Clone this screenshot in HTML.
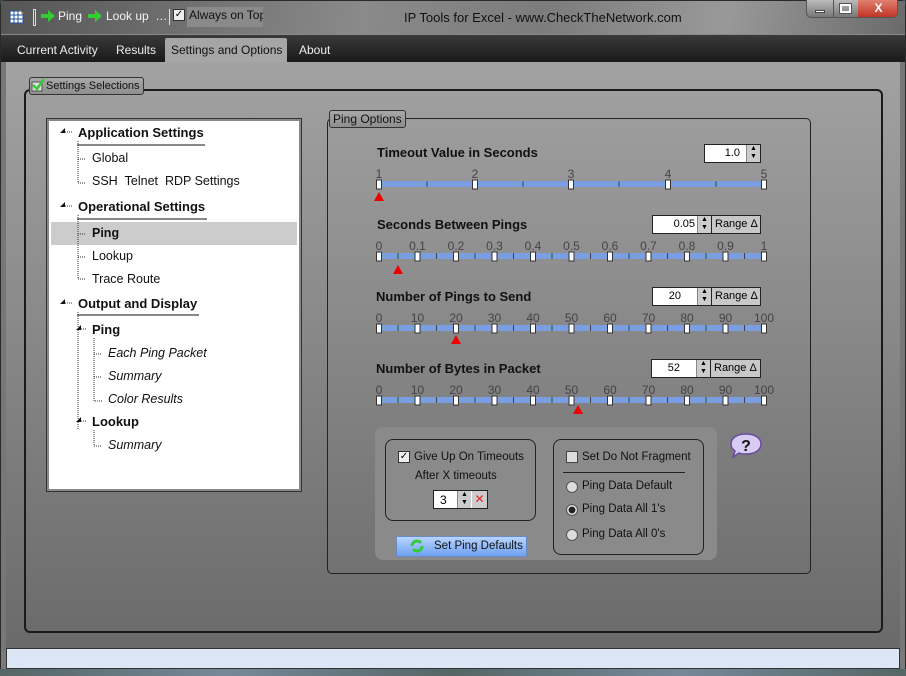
<!DOCTYPE html>
<html><head><meta charset="utf-8"><style>
*{margin:0;padding:0;box-sizing:border-box}
body{width:906px;height:676px;overflow:hidden;font-family:"Liberation Sans","DejaVu Sans",sans-serif;background:#3a4a50;position:relative}
.a{position:absolute}
#win{left:0;top:0;width:906px;height:676px;background:linear-gradient(#6e6e6e,#9a9a9a 8%,#7a7a7a);border:1px solid #2a2a2a;border-radius:6px 6px 0 0}
#title{left:1px;top:1px;width:904px;height:33px;background:linear-gradient(100deg,#555 0%,#8a8a8a 40%,#7c7c7c 60%,#999 80%,#6a6a6a);}
#tabs{left:1px;top:35px;width:904px;height:27px;background:linear-gradient(#3a3a3a,#1a1a1a)}
.tab{top:6px;height:21px;font-size:12px;color:#eee;line-height:16px}
#content{left:6px;top:62px;width:894px;height:586px;background:linear-gradient(#a2a2a2,#6a6a6a)}
.gb{border:2px solid #1a1a1a;border-radius:6px}
.leg{font-size:11px;color:#111;border:1px solid #333;border-radius:3px;background:linear-gradient(#a8a8a8,#8e8e8e);padding:0 3px;line-height:15px}
.t{font-size:12.5px;color:#111;white-space:nowrap}
.b{font-weight:bold;font-size:13px}
.i{font-style:italic}
.lbl{font-size:13px;font-weight:bold;color:#111}
.spin{background:#fff;border:1px solid #222;height:19px;font-size:11px;text-align:right}
.btns{background:#ccc;border-left:1px solid #888;width:14px;height:17px;font-size:7px;text-align:center;line-height:8px;color:#000}
.rng{background:#c8c8c8;border:1px solid #222;height:19px;font-size:11px;line-height:17px;padding-left:3px}
</style></head><body>
<div id="win" class="a"></div>
<div id="title" class="a"></div>
<svg class="a" style="left:9px;top:8px" width="16" height="16"><rect x="1" y="3" width="13" height="12" fill="#fff" stroke="#2250a0"/><path d="M1 7h13M1 11h13M5 3v12M9 3v12" stroke="#2250a0"/><path d="M10 1l5 4-2 1z" fill="#c08030"/></svg>
<div class="a" style="left:33px;top:9px;width:3px;height:17px;border:1px solid #ddd"></div>
<svg class="a" style="left:41px;top:10px" width="15" height="12"><path d="M0 4h7V0l7 6-7 6V8H0z" fill="#3c3"/></svg>
<div class="a t" style="left:58px;top:9px;color:#f4f4f4;font-size:12px">Ping</div>
<svg class="a" style="left:88px;top:10px" width="15" height="12"><path d="M0 4h7V0l7 6-7 6V8H0z" fill="#3c3"/></svg>
<div class="a t" style="left:106px;top:9px;color:#f4f4f4;font-size:12px">Look up &nbsp;…</div>
<div class="a" style="left:169px;top:9px;width:1px;height:16px;background:#ddd"></div>
<div class="a" style="left:173px;top:9px;width:12px;height:12px;border:1px solid #333;background:#eee;font-size:10px;line-height:10px;text-align:center">✓</div>
<div class="a t" style="left:187px;top:7px;background:#8a8a8a;color:#111;font-size:12px;padding:1px 2px;height:20px;width:76px;overflow:hidden">Always on Top</div>
<div class="a t" style="left:404px;top:10px;color:#111;font-size:13px">IP Tools for Excel - www.CheckTheNetwork.com</div>
<div class="a" style="left:806px;top:0;width:92px;height:18px;border:1px solid #555;border-top:none;border-radius:0 0 5px 5px;background:linear-gradient(#bbb,#777);overflow:hidden">
<div class="a" style="left:26px;top:0;width:1px;height:18px;background:#555"></div>
<div class="a" style="left:51px;top:0;width:41px;height:18px;background:linear-gradient(#e08070,#c03020);color:#fff;font-size:12px;font-weight:bold;text-align:center;line-height:16px">X</div>
<div class="a" style="left:8px;top:10px;width:10px;height:3px;background:#fff;border:1px solid #444"></div>
<div class="a" style="left:33px;top:4px;width:11px;height:9px;border:2px solid #fff;outline:1px solid #555"></div>
</div>
<div id="tabs" class="a"></div>
<div class="a tab" style="left:17px;top:42px">Current Activity</div>
<div class="a tab" style="left:116px;top:42px">Results</div>
<div class="a" style="left:165px;top:38px;width:122px;height:24px;background:#a6a6a6;border-radius:2px 2px 0 0"></div>
<div class="a tab" style="left:171px;top:42px;color:#111">Settings and Options</div>
<div class="a tab" style="left:299px;top:42px">About</div>
<div id="content" class="a"></div>
<div class="a" style="left:1px;top:62px;width:5px;height:590px;background:#777"></div>
<div class="a" style="left:900px;top:62px;width:5px;height:590px;background:#777"></div>
<div class="a" style="left:6px;top:648px;width:894px;height:21px;background:#dde6f4;border:1px solid #333"></div>
<div class="a" style="left:0;top:669px;width:906px;height:7px;background:linear-gradient(90deg,#566,#789,#566,#789,#566)"></div>

<div class="a gb" style="left:24px;top:89px;width:859px;height:544px"></div>
<div class="a leg" style="left:29px;top:77px;height:18px;padding-left:16px;line-height:16px">Settings Selections</div>
<svg class="a" style="left:31px;top:78px" width="14" height="14"><rect x="1" y="4" width="10" height="9" fill="#ddd" stroke="#555"/><path d="M2 7l4 4 7-10" stroke="#3c3" stroke-width="2.5" fill="none"/></svg>

<div class="a" style="left:47px;top:119px;width:254px;height:372px;background:#fff;border:2px solid #888;outline:1px solid #333"></div>
<div class="a" style="left:51px;top:222px;width:246px;height:23px;background:#ccc"></div>
<svg class="a" style="left:50px;top:120px" width="220" height="340">
<g fill="#111"><path d="M10 13l5-5v5z"/><path d="M10 87l5-5v5z"/><path d="M10 184l5-5v5z"/><path d="M26 210l5-5v5z"/><path d="M26 302l5-5v5z"/></g>
<g stroke="#333" stroke-dasharray="1 1" fill="none">
<path d="M15 12h8M15 86h8M15 183h8M31 209h5M31 301h5"/>
<path d="M28 21v42h8M28 39h8"/>
<path d="M28 95v64h8M28 114h8M28 137h8"/>
<path d="M28 192v117"/>
<path d="M44 218v63h8M44 234h8M44 257h8"/>
<path d="M44 310v16h8"/>
</g>
<g stroke="#111"><path d="M27 25h128M27 99h130M27 195h122"/></g>
</svg>
<div class="a t b" style="left:78px;top:125px">Application Settings</div>
<div class="a t" style="left:92px;top:151px">Global</div>
<div class="a t" style="left:92px;top:174px">SSH &nbsp;Telnet &nbsp;RDP Settings</div>
<div class="a t b" style="left:78px;top:199px">Operational Settings</div>
<div class="a t b" style="left:92px;top:226px;font-size:12.5px">Ping</div>
<div class="a t" style="left:92px;top:249px">Lookup</div>
<div class="a t" style="left:92px;top:272px">Trace Route</div>
<div class="a t b" style="left:78px;top:296px">Output and Display</div>
<div class="a t b" style="left:92px;top:322px">Ping</div>
<div class="a t i" style="left:108px;top:346px">Each Ping Packet</div>
<div class="a t i" style="left:108px;top:369px">Summary</div>
<div class="a t i" style="left:108px;top:392px">Color Results</div>
<div class="a t b" style="left:92px;top:414px">Lookup</div>
<div class="a t i" style="left:108px;top:438px">Summary</div>

<div class="a" style="left:327px;top:118px;width:484px;height:456px;border:1px solid #222;border-radius:5px"></div>
<div class="a leg" style="left:329px;top:110px;height:18px;line-height:16px;font-size:12px">Ping Options</div>

<div class="a lbl" style="left:377px;top:145px">Timeout Value in Seconds</div>
<div class="a spin" style="left:704px;top:144px;width:57px"><span style="position:absolute;right:20px;top:2px">1.0</span><div class="a btns" style="right:0;top:0">▲<br>▼</div></div>
<div class="a lbl" style="left:377px;top:217px">Seconds Between Pings</div>
<div class="a spin" style="left:652px;top:215px;width:60px"><span style="position:absolute;right:16px;top:2px">0.05</span><div class="a btns" style="right:0;top:0">▲<br>▼</div></div>
<div class="a rng" style="left:711px;top:215px;width:50px">Range Δ</div>
<div class="a lbl" style="left:376px;top:289px">Number of Pings to Send</div>
<div class="a spin" style="left:652px;top:287px;width:60px"><span style="position:absolute;right:30px;top:2px">20</span><div class="a btns" style="right:0;top:0">▲<br>▼</div></div>
<div class="a rng" style="left:711px;top:287px;width:50px">Range Δ</div>
<div class="a lbl" style="left:376px;top:361px">Number of Bytes in Packet</div>
<div class="a spin" style="left:651px;top:359px;width:60px"><span style="position:absolute;right:30px;top:2px">52</span><div class="a btns" style="right:0;top:0">▲<br>▼</div></div>
<div class="a rng" style="left:710px;top:359px;width:51px">Range Δ</div>

<svg class="a" style="left:0;top:0" width="906" height="430" font-family="Liberation Sans,sans-serif" font-size="12" fill="#444">
<defs><g id="th"><rect x="-2.5" y="-4" width="5" height="9" fill="#fff" stroke="#333" stroke-width="1"/></g></defs>
<rect x="379" y="181" width="385" height="6" fill="#7a9ee0"/>
<g stroke="#444"><path d="M427 181v6M523 181v6M619 181v6M716 181v6"/></g>
<g text-anchor="middle"><text x="379" y="178">1</text><text x="475" y="178">2</text><text x="571" y="178">3</text><text x="668" y="178">4</text><text x="764" y="178">5</text></g>
<use href="#th" x="379" y="184"/><use href="#th" x="475" y="184"/><use href="#th" x="571" y="184"/><use href="#th" x="668" y="184"/><use href="#th" x="764" y="184"/>
<path d="M379 192l-5 9h10z" fill="#e00"/>
<rect x="379" y="253" width="385" height="6" fill="#7a9ee0"/>
<g stroke="#444"><path d="M398 253v6M436.5 253v6M475 253v6M513.5 253v6M552 253v6M590.5 253v6M629 253v6M667.5 253v6M706 253v6M744.5 253v6"/></g>
<g text-anchor="middle"><text x="379" y="250">0</text><text x="417.5" y="250">0.1</text><text x="456" y="250">0.2</text><text x="494.5" y="250">0.3</text><text x="533" y="250">0.4</text><text x="571.5" y="250">0.5</text><text x="610" y="250">0.6</text><text x="648.5" y="250">0.7</text><text x="687" y="250">0.8</text><text x="725.5" y="250">0.9</text><text x="764" y="250">1</text></g>
<use href="#th" x="379" y="256"/><use href="#th" x="417.5" y="256"/><use href="#th" x="456" y="256"/><use href="#th" x="494.5" y="256"/><use href="#th" x="533" y="256"/><use href="#th" x="571.5" y="256"/><use href="#th" x="610" y="256"/><use href="#th" x="648.5" y="256"/><use href="#th" x="687" y="256"/><use href="#th" x="725.5" y="256"/><use href="#th" x="764" y="256"/>
<path d="M398 265l-5 9h10z" fill="#e00"/>
<rect x="379" y="325" width="385" height="6" fill="#7a9ee0"/>
<g stroke="#444"><path d="M398 325v6M436.5 325v6M475 325v6M513.5 325v6M552 325v6M590.5 325v6M629 325v6M667.5 325v6M706 325v6M744.5 325v6"/></g>
<g text-anchor="middle"><text x="379" y="322">0</text><text x="417.5" y="322">10</text><text x="456" y="322">20</text><text x="494.5" y="322">30</text><text x="533" y="322">40</text><text x="571.5" y="322">50</text><text x="610" y="322">60</text><text x="648.5" y="322">70</text><text x="687" y="322">80</text><text x="725.5" y="322">90</text><text x="764" y="322">100</text></g>
<use href="#th" x="379" y="328"/><use href="#th" x="417.5" y="328"/><use href="#th" x="456" y="328"/><use href="#th" x="494.5" y="328"/><use href="#th" x="533" y="328"/><use href="#th" x="571.5" y="328"/><use href="#th" x="610" y="328"/><use href="#th" x="648.5" y="328"/><use href="#th" x="687" y="328"/><use href="#th" x="725.5" y="328"/><use href="#th" x="764" y="328"/>
<path d="M456 335l-5 9h10z" fill="#e00"/>
<rect x="379" y="397" width="385" height="6" fill="#7a9ee0"/>
<g stroke="#444"><path d="M398 397v6M436.5 397v6M475 397v6M513.5 397v6M552 397v6M590.5 397v6M629 397v6M667.5 397v6M706 397v6M744.5 397v6"/></g>
<g text-anchor="middle"><text x="379" y="394">0</text><text x="417.5" y="394">10</text><text x="456" y="394">20</text><text x="494.5" y="394">30</text><text x="533" y="394">40</text><text x="571.5" y="394">50</text><text x="610" y="394">60</text><text x="648.5" y="394">70</text><text x="687" y="394">80</text><text x="725.5" y="394">90</text><text x="764" y="394">100</text></g>
<use href="#th" x="379" y="400"/><use href="#th" x="417.5" y="400"/><use href="#th" x="456" y="400"/><use href="#th" x="494.5" y="400"/><use href="#th" x="533" y="400"/><use href="#th" x="571.5" y="400"/><use href="#th" x="610" y="400"/><use href="#th" x="648.5" y="400"/><use href="#th" x="687" y="400"/><use href="#th" x="725.5" y="400"/><use href="#th" x="764" y="400"/>
<path d="M578 405l-5 9h10z" fill="#e00"/>
</svg>

<div class="a" style="left:375px;top:427px;width:342px;height:133px;background:#8a8a8a;border-radius:8px"></div>
<div class="a" style="left:385px;top:439px;width:151px;height:82px;border:1px solid #222;border-radius:8px"></div>
<div class="a" style="left:398px;top:451px;width:12px;height:12px;border:1px solid #333;background:#eee;font-size:10px;line-height:10px;text-align:center">✓</div>
<div class="a t" style="left:414px;top:451px;font-size:11.5px">Give Up On Timeouts</div>
<div class="a t" style="left:415px;top:470px;font-size:11.5px">After X timeouts</div>
<div class="a" style="left:433px;top:490px;width:55px;height:19px;background:#fff;border:1px solid #222;font-size:12px;padding:2px 6px">3</div>
<div class="a btns" style="left:457px;top:491px;height:17px">▲<br>▼</div>
<div class="a" style="left:472px;top:491px;width:15px;height:17px;background:#ccc;color:#d22;font-size:12px;text-align:center;line-height:16px">✕</div>
<div class="a" style="left:396px;top:536px;width:131px;height:21px;background:linear-gradient(#b8d4ff,#6ea0f0);border:1px solid #6a8ac0;font-size:11.5px;color:#111;padding:3px 0 0 37px">Set Ping Defaults</div>
<svg class="a" style="left:409px;top:538px" width="16" height="16"><path d="M3 8a5 5 0 0 1 9-3M13 8a5 5 0 0 1-9 3" stroke="#3c3" stroke-width="3" fill="none"/></svg>
<div class="a" style="left:553px;top:439px;width:151px;height:116px;border:1px solid #222;border-radius:8px"></div>
<div class="a" style="left:566px;top:451px;width:12px;height:12px;border:1px solid #444;background:#ddd"></div>
<div class="a t" style="left:582px;top:451px;font-size:11.5px">Set Do Not Fragment</div>
<div class="a" style="left:563px;top:472px;width:122px;height:1px;background:#222"></div>
<div class="a" style="left:566px;top:481px;width:12px;height:12px;border-radius:50%;border:1px solid #555;background:#ddd"></div>
<div class="a t" style="left:582px;top:480px;font-size:11.5px">Ping Data Default</div>
<div class="a" style="left:566px;top:504px;width:12px;height:12px;border-radius:50%;border:1px solid #555;background:radial-gradient(#222 45%,#ddd 50%)"></div>
<div class="a t" style="left:582px;top:503px;font-size:11.5px">Ping Data All 1's</div>
<div class="a" style="left:566px;top:529px;width:12px;height:12px;border-radius:50%;border:1px solid #555;background:#ddd"></div>
<div class="a t" style="left:582px;top:528px;font-size:11.5px">Ping Data All 0's</div>
<svg class="a" style="left:730px;top:432px" width="34" height="28"><path d="M16 2c9 0 15 4 15 10s-6 10-15 10c-3 0-5 0-7-1l-6 4 2-6C2 17 1 15 1 12 1 6 7 2 16 2z" fill="#d8ccf4" stroke="#6a4aa0" stroke-width="1.5"/><text x="16" y="19" text-anchor="middle" font-size="16" font-weight="bold" fill="#111" font-family="Liberation Sans">?</text></svg>
</body></html>
